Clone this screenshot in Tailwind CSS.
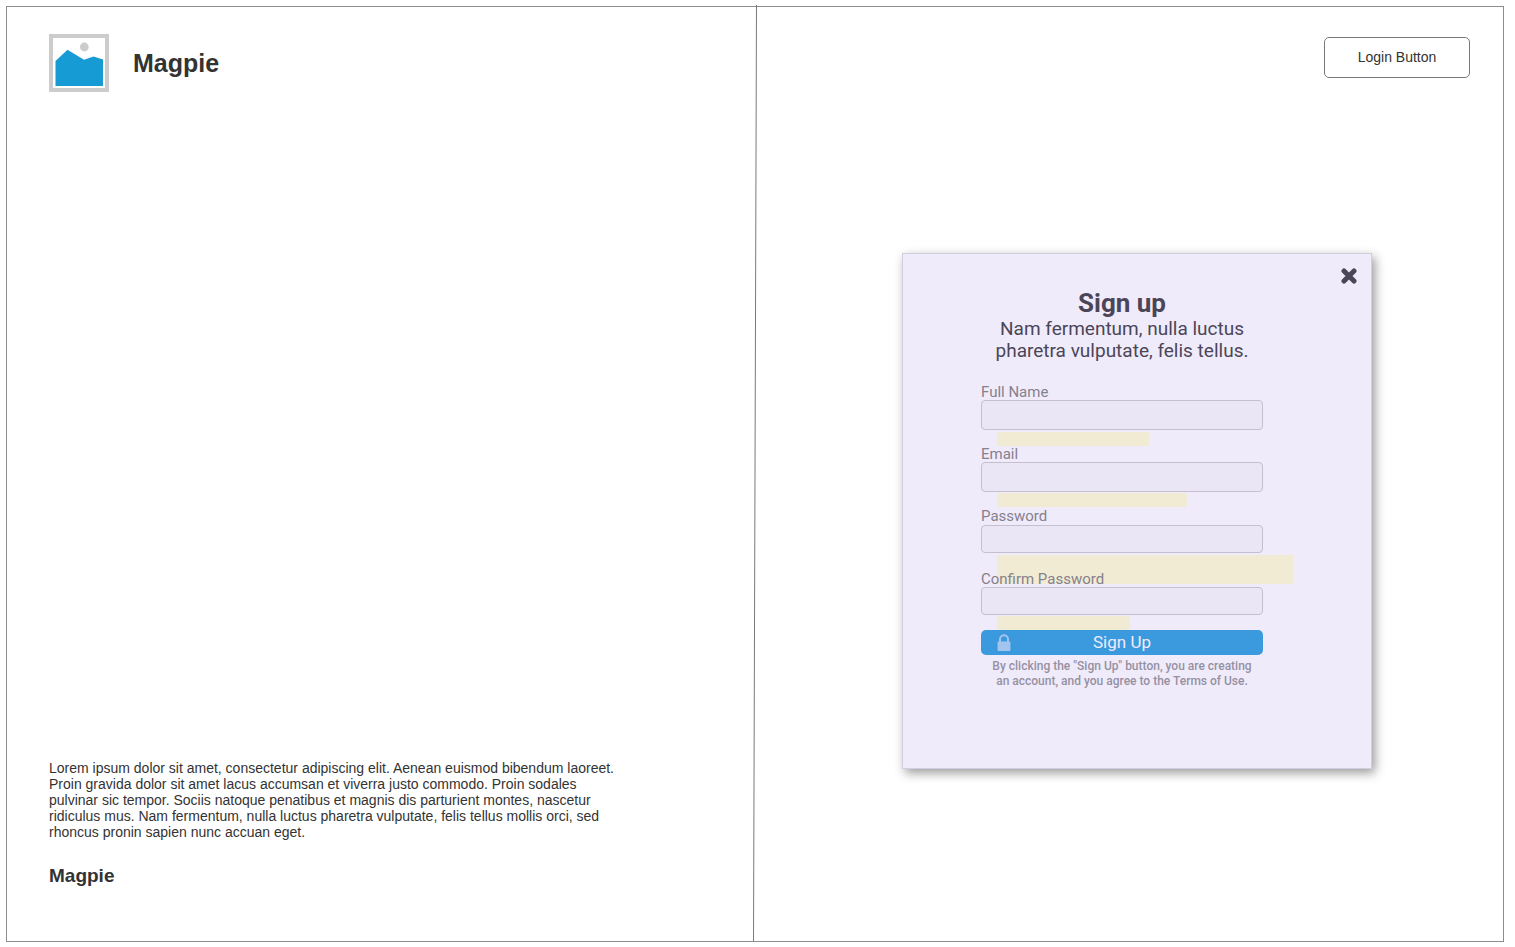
<!DOCTYPE html>
<html lang="en">
<head>
<meta charset="utf-8">
<meta name="viewport" content="width=device-width, initial-scale=1">
<title>Magpie</title>
<script src="https://cdn.jsdelivr.net/npm/@tailwindcss/browser@4"></script>
</head>
<body class="flex min-h-screen bg-white pt-[6px] pr-[11px] pb-[5px] pl-[6px] font-['Liberation_Sans',Arial,sans-serif] text-[#333333]">
<main class="relative grid flex-1 grid-cols-2 border border-[#8c8c8c]">
  <!-- Slightly slanted divider between the two halves -->
  <svg class="pointer-events-none absolute inset-0 h-full w-full overflow-visible" aria-hidden="true">
    <line x1="50.1%" y1="-2" x2="49.9%" y2="100%" stroke="#797979" stroke-width="1"/>
  </svg>

  <section class="flex flex-col justify-between pt-[27px] pr-10 pb-[53px] pl-[42px]">
    <header class="flex items-center gap-6">
      <svg class="h-[58px] w-[60px]" viewBox="0 0 60 58" aria-hidden="true">
        <rect x="2" y="2" width="56" height="54" fill="#fff" stroke="#cccccc" stroke-width="4"/>
        <circle cx="35.3" cy="13" r="4.4" fill="#cccccc"/>
        <path d="M6.5 27 18.5 15.7 35 25.7 44.5 22.4 54 25.6V52H6.5Z" fill="#169bd5"/>
      </svg>
      <h1 class="text-[25px] leading-8 font-bold">Magpie</h1>
    </header>
    <div>
      <p class="text-[14px] leading-[16px]">Lorem ipsum dolor sit amet, consectetur adipiscing elit. Aenean euismod bibendum laoreet.<br>Proin gravida dolor sit amet lacus accumsan et viverra justo commodo. Proin sodales<br>pulvinar sic tempor. Sociis natoque penatibus et magnis dis parturient montes, nascetur<br>ridiculus mus. Nam fermentum, nulla luctus pharetra vulputate, felis tellus mollis orci, sed<br>rhoncus pronin sapien nunc accuan eget.</p>
      <h2 class="mt-6 text-[19px] leading-6 font-bold">Magpie</h2>
    </div>
  </section>

  <section class="flex flex-col pt-[30px] pr-[33px] pb-10">
    <button type="button" class="h-[41px] w-[146px] self-end rounded-[5px] border border-[#797979] bg-white text-[14px]">Login Button</button>

    <form class="mt-[175px] mr-[98px] flex w-[470px] flex-col self-end border border-[#d2cde0] bg-[#f0ebfb] pb-[79px] font-[Roboto,sans-serif] text-[#4b4657] shadow-[3px_4px_10px_rgba(0,0,0,0.4)]">
      <button type="button" aria-label="Close" class="mt-[14px] mr-[14px] self-end">
        <svg class="size-4" viewBox="0 0 16 16" fill="none" stroke="#4b4657" stroke-width="5" stroke-linecap="round" aria-hidden="true"><path d="M3 3 13 13M13 3 3 13"/></svg>
      </button>
      <div class="ml-[78px] flex w-[282px] flex-col">
        <h2 class="mt-1 text-center text-[26px] leading-[30px] font-bold">Sign up</h2>
        <p class="text-center text-[19px] leading-[22px]">Nam fermentum, nulla luctus<br>pharetra vulputate, felis tellus.</p>

        <label for="name" class="relative mt-[22px] text-[15px] leading-4 text-[#85818d]">Full Name</label>
        <input id="name" type="text" class="h-[30px] rounded-[4px] border border-[#c5bfd0] bg-[#eae6f5] px-2 text-[15px]">
        <div class="mt-[2px] ml-4 h-[14px] w-[152px] bg-[#f2ebd3]"></div>

        <label for="email" class="relative text-[15px] leading-4 text-[#85818d]">Email</label>
        <input id="email" type="email" class="h-[30px] rounded-[4px] border border-[#c5bfd0] bg-[#eae6f5] px-2 text-[15px]">
        <div class="mt-px ml-4 h-[14px] w-[190px] bg-[#f2ebd3]"></div>

        <label for="password" class="relative mt-px text-[15px] leading-4 text-[#85818d]">Password</label>
        <input id="password" type="password" class="mt-px h-[28px] rounded-[4px] border border-[#c5bfd0] bg-[#eae6f5] px-2 text-[15px]">
        <div class="mt-[2px] ml-4 h-[29px] w-[296px] bg-[#f2ebd3]"></div>

        <label for="confirm" class="relative -mt-[13px] text-[15px] leading-4 text-[#85818d]">Confirm Password</label>
        <input id="confirm" type="password" class="h-[28px] rounded-[4px] border border-[#c5bfd0] bg-[#eae6f5] px-2 text-[15px]">
        <div class="mt-px ml-4 h-[14px] w-[133px] bg-[#f2ebd3]"></div>

        <button type="submit" class="grid h-[25px] grid-cols-[1fr_auto_1fr] items-center rounded-[5px] bg-[#3b99de] px-4 text-[17px] text-[#f0ebfb]">
          <svg class="h-[17px] w-[14px]" viewBox="0 0 14 17" aria-hidden="true"><path d="M3 8V5.200a4 4 0 0 1 8 0V8" fill="none" stroke="#a3c4ef" stroke-width="2"/><rect x=".6" y="7.5" width="12.8" height="9.5" rx="1" fill="#a3c4ef"/></svg>
          <span>Sign Up</span>
        </button>
        <p class="mt-1 text-center text-[12px] leading-[15px] font-medium text-[#9591a2]">By clicking the "Sign Up" button, you are creating<br>an account, and you agree to the Terms of Use.</p>
      </div>
    </form>
  </section>
</main>
</body>
</html>
